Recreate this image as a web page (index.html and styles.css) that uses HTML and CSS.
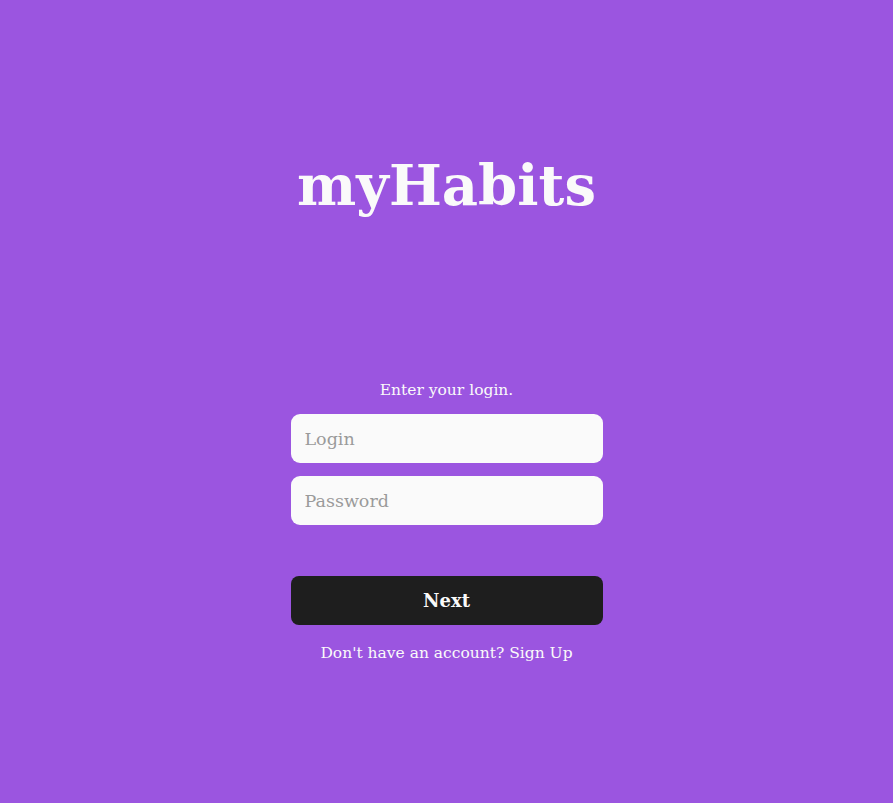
FILE: index.html
```html
<!DOCTYPE html>
<html>
<head>
<meta charset="utf-8">
<link rel="stylesheet" href="styles.css">
</head>
<body>
<main class="page">
  <h1 class="title">myHabits</h1>
  <form class="form">
    <p class="hint">Enter your login.</p>
    <input class="field" type="text" placeholder="Login">
    <input class="field" type="password" placeholder="Password">
    <button class="next" type="button">Next</button>
    <p class="signup">Don't have an account? Sign Up</p>
  </form>
</main>
</body>
</html>
```
FILE: styles.css
```css
html, body {
  margin: 0;
  padding: 0;
  height: 100%;
}
body {
  background: #9b55e0;
  font-family: "DejaVu Serif", "Liberation Serif", serif;
}
.page {
  display: flex;
  flex-direction: column;
  align-items: center;
  padding-top: 148px;
}
.title {
  margin: 0;
  color: #fafafa;
  font-size: 56px;
  font-weight: bold;
  line-height: 74px;
}
.form {
  margin-top: 158px;
  width: 312px;
  display: flex;
  flex-direction: column;
}
.hint {
  margin: 0 0 14px;
  text-align: center;
  color: #fafafa;
  font-size: 15.5px;
  line-height: 20px;
}
.field {
  box-sizing: border-box;
  height: 49px;
  border: none;
  border-radius: 9px;
  background: #fafafa;
  padding: 0 14px;
  font-family: inherit;
  font-size: 17.5px;
  color: #333;
  margin-bottom: 13px;
  outline: none;
}
.field::placeholder {
  color: #9a9a9a;
}
.next {
  margin-top: 38px;
  height: 49px;
  border: none;
  border-radius: 8px;
  background: #1e1e1e;
  color: #fafafa;
  font-family: inherit;
  font-weight: bold;
  font-size: 18px;
}
.signup {
  margin: 18px 0 0;
  text-align: center;
  color: #fafafa;
  font-size: 15.5px;
  line-height: 20px;
}
```
